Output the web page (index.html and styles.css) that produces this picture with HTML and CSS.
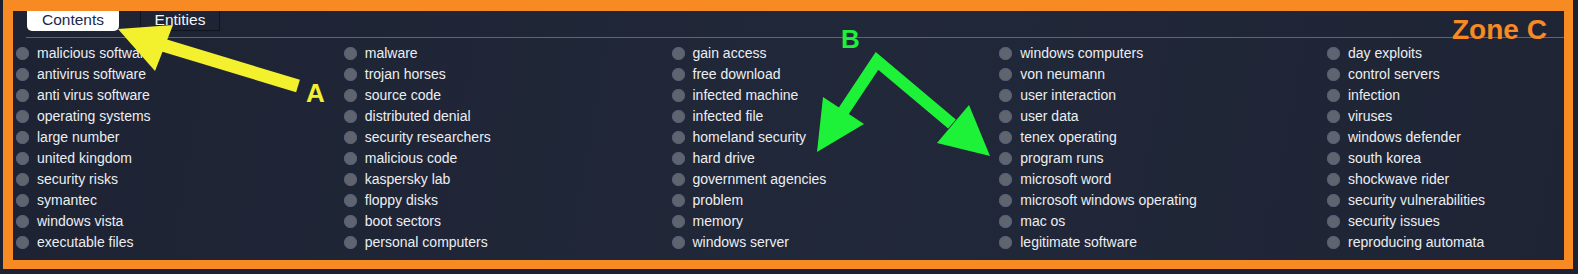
FILE: index.html
```html
<!DOCTYPE html>
<html>
<head>
<meta charset="utf-8">
<link rel="stylesheet" href="styles.css">
</head>
<body>
<div class="frame">
  <div class="panel">
    <div class="tabs">
      <div class="tab active">Contents</div>
      <div class="tab">Entities</div>
    </div>
    <div class="rule"></div>
    <ul class="list">
      <li><span class="dot"></span>malicious software</li>
      <li><span class="dot"></span>antivirus software</li>
      <li><span class="dot"></span>anti virus software</li>
      <li><span class="dot"></span>operating systems</li>
      <li><span class="dot"></span>large number</li>
      <li><span class="dot"></span>united kingdom</li>
      <li><span class="dot"></span>security risks</li>
      <li><span class="dot"></span>symantec</li>
      <li><span class="dot"></span>windows vista</li>
      <li><span class="dot"></span>executable files</li>
      <li><span class="dot"></span>malware</li>
      <li><span class="dot"></span>trojan horses</li>
      <li><span class="dot"></span>source code</li>
      <li><span class="dot"></span>distributed denial</li>
      <li><span class="dot"></span>security researchers</li>
      <li><span class="dot"></span>malicious code</li>
      <li><span class="dot"></span>kaspersky lab</li>
      <li><span class="dot"></span>floppy disks</li>
      <li><span class="dot"></span>boot sectors</li>
      <li><span class="dot"></span>personal computers</li>
      <li><span class="dot"></span>gain access</li>
      <li><span class="dot"></span>free download</li>
      <li><span class="dot"></span>infected machine</li>
      <li><span class="dot"></span>infected file</li>
      <li><span class="dot"></span>homeland security</li>
      <li><span class="dot"></span>hard drive</li>
      <li><span class="dot"></span>government agencies</li>
      <li><span class="dot"></span>problem</li>
      <li><span class="dot"></span>memory</li>
      <li><span class="dot"></span>windows server</li>
      <li><span class="dot"></span>windows computers</li>
      <li><span class="dot"></span>von neumann</li>
      <li><span class="dot"></span>user interaction</li>
      <li><span class="dot"></span>user data</li>
      <li><span class="dot"></span>tenex operating</li>
      <li><span class="dot"></span>program runs</li>
      <li><span class="dot"></span>microsoft word</li>
      <li><span class="dot"></span>microsoft windows operating</li>
      <li><span class="dot"></span>mac os</li>
      <li><span class="dot"></span>legitimate software</li>
      <li><span class="dot"></span>day exploits</li>
      <li><span class="dot"></span>control servers</li>
      <li><span class="dot"></span>infection</li>
      <li><span class="dot"></span>viruses</li>
      <li><span class="dot"></span>windows defender</li>
      <li><span class="dot"></span>south korea</li>
      <li><span class="dot"></span>shockwave rider</li>
      <li><span class="dot"></span>security vulnerabilities</li>
      <li><span class="dot"></span>security issues</li>
      <li><span class="dot"></span>reproducing automata</li>
    </ul>
  </div>
</div>

<svg class="annot" width="1578" height="274" viewBox="0 0 1578 274">
  <g fill="#f3f12e">
    <line x1="298" y1="86" x2="156" y2="43" stroke="#f3f12e" stroke-width="13"/>
    <polygon points="118,29 173,25 155,71"/>
  </g>
  <g fill="#1df239" stroke="#1df239">
    <polyline points="843,112 877,61 952,124" fill="none" stroke-width="12" stroke-linejoin="miter"/>
    <polygon points="817,152 823,97 864,124" stroke="none"/>
    <polygon points="990,156 969,105 937,143" stroke="none"/>
  </g>
</svg>
<span class="label label-a">A</span>
<span class="label label-b">B</span>
<span class="label label-c">Zone C</span>
</body>
</html>
```

FILE: styles.css
```css
html, body {
  margin: 0;
  padding: 0;
}

body {
  width: 1578px;
  height: 274px;
  background: #1d2232;
  position: relative;
  overflow: hidden;
  font-family: "Liberation Sans", Arial, sans-serif;
}

.frame {
  margin-left: 3px;
  width: 1551px;
  height: 249px;
  border-style: solid;
  border-color: #f78a22;
  border-width: 11px 9px 9px 10px;
  background: linear-gradient(100deg, #1d2333 0%, #212839 55%, #1e2434 100%);
}

.panel {
  display: flex;
  flex-direction: column;
}

.tabs {
  display: flex;
  gap: 21px;
  padding-left: 14px;
  height: 20px;
}

.tab {
  height: 20px;
  box-sizing: border-box;
  display: flex;
  align-items: center;
  justify-content: center;
  font-size: 15.5px;
  line-height: 1;
  padding-bottom: 2px;
  color: #f4f4f6;
  width: 80px;
  border: 1px solid #10141d;
  border-top: none;
}

.tab.active {
  width: 92px;
  background: #ffffff;
  color: #1c2848;
  border: none;
  border-radius: 0 0 5px 5px;
}

.rule {
  margin: 6px 0 0 13px;
  height: 1px;
  background: #5e6576;
}

.list {
  list-style: none;
  margin: 0;
  padding: 4px 0 0 3px;
  display: grid;
  grid-auto-flow: column;
  grid-template-rows: repeat(10, 21px);
  grid-template-columns: repeat(4, 327.75px) 1fr;
}

.list li {
  display: flex;
  align-items: center;
  font-size: 14px;
  color: #eceef2;
  white-space: nowrap;
}

.dot {
  width: 13px;
  height: 13px;
  border-radius: 50%;
  background: #60646f;
  box-shadow: inset 0 0 0 1px #53607a;
  margin-right: 8px;
  margin-top: 1px;
  flex: none;
}

.annot {
  position: absolute;
  left: 0;
  top: 0;
  pointer-events: none;
}

.label {
  position: absolute;
  font-weight: bold;
  line-height: 1;
}

.label-a {
  left: 306px;
  top: 80px;
  font-size: 26px;
  color: #f3f12e;
}

.label-b {
  left: 841px;
  top: 26px;
  font-size: 26px;
  color: #1df239;
}

.label-c {
  left: 1452px;
  top: 16px;
  font-size: 28px;
  color: #f78a22;
}
```
